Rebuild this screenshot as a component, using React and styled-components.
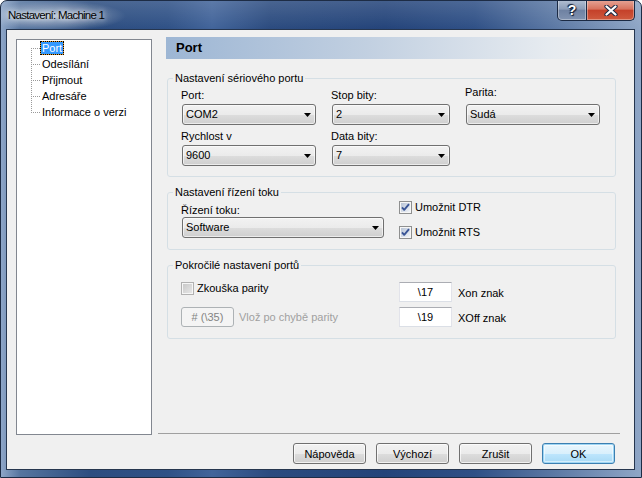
import React from "react";
import styled, { createGlobalStyle } from "styled-components";

const GlobalStyle = createGlobalStyle`
  html, body { margin: 0; padding: 0; }
  body {
    background: #fff;
    font-family: "Liberation Sans", Arial, sans-serif;
    font-size: 11px;
    color: #000;
  }
  * { box-sizing: border-box; }
`;

const Window = styled.div`
  width: 642px;
  height: 478px;
  display: flex;
  flex-direction: column;
  padding: 0 6px 7px 5px;
  border: 1px solid #1d2c45;
  border-radius: 7px 7px 0 0;
  overflow: hidden;
  background:
    radial-gradient(ellipse 70px 15px at 55px 15px, rgba(255,255,255,0.55), rgba(255,255,255,0) 100%),
    linear-gradient(to bottom, rgba(255,255,255,0.14), rgba(255,255,255,0) 28px),
    linear-gradient(to right, #8ea6c8 0%, #56759f 3%, #2c4d80 14%, #2f5186 26%, #42649a 33%, #2b4b7f 42%, #24447a 60%, #2f5086 74%, #5a77a3 86%, #8fa6c6 100%);
`;

const TitleBar = styled.div`
  height: 28px;
  flex-shrink: 0;
  display: flex;
  align-items: flex-start;
  padding-left: 2px;
`;

const Caption = styled.div`
  margin-top: 7px;
  font-size: 11.5px;
  line-height: 14px;
  letter-spacing: -0.75px;
  color: #000;
  text-shadow: 0 0 5px rgba(255,255,255,0.9), 0 0 9px rgba(255,255,255,0.7);
`;

const CaptionButtons = styled.div`
  margin-left: auto;
  margin-top: -1px;
  display: flex;
  height: 21px;
`;

const CapBtn = styled.div`
  width: ${(p) => p.$w}px;
  height: 100%;
  display: flex;
  align-items: center;
  justify-content: center;
  border: 1px solid #1b2a44;
  border-top: none;
  border-left: ${(p) => (p.$close ? "none" : "1px solid #1b2a44")};
  border-radius: ${(p) => (p.$close ? "0 0 5px 0" : "0 0 0 5px")};
  box-shadow: inset 0 0 0 1px rgba(255,255,255,0.35);
  background: ${(p) =>
    p.$close
      ? "linear-gradient(to bottom, #e6a698 0%, #d8735e 45%, #c5412a 52%, #cf5a3e 100%)"
      : "linear-gradient(to bottom, #b3c0d3 0%, #8c9db8 45%, #6f82a2 52%, #8193b1 100%)"};
  color: #fff;
  font-weight: bold;
  font-size: 14px;
  text-shadow: 0 0 1px #0d1a33, 1px 1px 1px #0d1a33, -1px -1px 1px #0d1a33;
`;

const Client = styled.div`
  flex: 1;
  display: flex;
  flex-direction: column;
  background: #f0f0f0;
  border: 1px solid #26364f;
  padding: 7px 0 0 9px;
`;

const Main = styled.div`
  display: flex;
  height: 398px;
`;

const Tree = styled.div`
  width: 136px;
  height: 396px;
  margin-top: 2px;
  border: 1px solid #828790;
  background: #fff;
`;

const TreeList = styled.div`
  position: relative;
  padding-left: 14px;
  &::before {
    content: "";
    position: absolute;
    left: 14px;
    top: 8px;
    height: 65px;
    border-left: 1px dotted #9a9a9a;
  }
`;

const TreeRow = styled.div`
  height: 16px;
  display: flex;
  align-items: center;
`;

const Stub = styled.span`
  width: 9px;
  border-top: 1px dotted #9a9a9a;
`;

const TreeLabel = styled.span`
  line-height: 12px;
  padding: 0 1px;
  border: 1px solid ${(p) => (p.$sel ? "#e39a2c" : "transparent")};
  outline: ${(p) => (p.$sel ? "1px dotted #000" : "none")};
  outline-offset: -1px;
  background: ${(p) => (p.$sel ? "#3399ff" : "transparent")};
  color: ${(p) => (p.$sel ? "#fff" : "#000")};
`;

const RightPanel = styled.div`
  margin-left: 6px;
  width: 462px;
  display: flex;
  flex-direction: column;
`;

const Header = styled.div`
  margin-left: 8px;
  width: 450px;
  height: 22px;
  line-height: 22px;
  padding-left: 10px;
  font-size: 13px;
  font-weight: bold;
  background: linear-gradient(to right, #9db6d4 0%, #c2d0e1 45%, #e6ebf0 85%, #f0f0f0 100%);
`;

const Group = styled.fieldset`
  margin: ${(p) => p.$mt}px 0 0 9px;
  width: 449px;
  min-width: 0;
  padding: 0;
  border: 1px solid #d5dfe5;
  border-radius: 3px;
`;

const Legend = styled.legend`
  margin-left: 5px;
  padding: 0 2px;
  font-size: 11px;
  line-height: 13px;
`;

const SerialGrid = styled.div`
  display: grid;
  grid-template-columns: 134px 118px 134px;
  column-gap: 16px;
  row-gap: 5px;
  padding: 4px 0 10px 14px;
`;

const Field = styled.div`
  display: flex;
  flex-direction: column;
  margin-top: ${(p) => p.$shift || 0}px;
`;

const Label = styled.div`
  line-height: 13px;
  margin-left: -1px;
  margin-bottom: ${(p) => (p.$gap ?? 2)}px;
`;

const ComboBox = styled.div`
  width: ${(p) => p.$w}px;
  height: 21px;
  display: flex;
  align-items: center;
  padding: 0 4px 0 3px;
  border: 1px solid #707070;
  border-radius: 3px;
  background: linear-gradient(to bottom, #f2f2f2 0%, #ebebeb 50%, #dddddd 51%, #cfcfcf 100%);
  box-shadow: inset 0 0 0 1px rgba(255,255,255,0.6);
  line-height: 13px;
`;

const ComboText = styled.span`
  flex: 1;
`;

const FlowBody = styled.div`
  display: flex;
  padding: 2px 0 10px 14px;
`;

const LeftCol = styled.div`
  width: ${(p) => p.$w}px;
  display: flex;
  flex-direction: column;
  padding-top: ${(p) => p.$pt || 0}px;
`;

const RightCol = styled.div`
  display: flex;
  flex-direction: column;
  gap: ${(p) => p.$gap}px;
`;

const CheckRow = styled.label`
  display: flex;
  align-items: center;
  height: 13px;
  gap: 3px;
  line-height: 13px;
`;

const AdvBody = styled.div`
  display: flex;
  padding: 10px 0 11px 13px;
`;

const AdvLeft = styled.div`
  width: 218px;
  display: flex;
  flex-direction: column;
  gap: 12px;
`;

const InsertRow = styled.div`
  display: flex;
  align-items: center;
  gap: 5px;
`;

const DisabledButton = styled.div`
  width: 53px;
  height: 20px;
  display: flex;
  align-items: center;
  justify-content: center;
  border: 1px solid #adb2b5;
  border-radius: 3px;
  background: #f4f4f4;
  color: #838383;
`;

const GrayText = styled.span`
  color: #a0a0a0;
`;

const EditRow = styled.div`
  display: flex;
  align-items: center;
  gap: 6px;
`;

const Edit = styled.div`
  width: 53px;
  height: 20px;
  display: flex;
  align-items: center;
  justify-content: center;
  background: #fff;
  border: 1px solid #dbdfe6;
  border-top-color: #abadb3;
  border-left-color: #e2e3ea;
  border-right-color: #e2e3ea;
`;

const EditLabel = styled.span`
  padding-top: 2px;
`;

const Separator = styled.div`
  margin-top: auto;
  margin-bottom: 1px;
  height: 1px;
  background: #a0a0a0;
`;

const ButtonRow = styled.div`
  margin-top: 8px;
  display: flex;
  justify-content: flex-end;
  gap: 10px;
  padding-right: 19px;
`;

const Button = styled.div`
  width: 73px;
  height: 21px;
  display: flex;
  align-items: center;
  justify-content: center;
  border: 1px solid ${(p) => (p.$default ? "#3c7fb1" : "#707070")};
  border-radius: 3px;
  background: ${(p) =>
    p.$default
      ? "linear-gradient(to bottom, #eaf6fd 0%, #d9f0fc 50%, #bee6fd 51%, #a7d9f5 100%)"
      : "linear-gradient(to bottom, #f2f2f2 0%, #ebebeb 50%, #dddddd 51%, #cfcfcf 100%)"};
  box-shadow: ${(p) =>
    p.$default ? "inset 0 0 0 1px #9fd6f4, inset 0 0 0 2px rgba(255,255,255,0.5)" : "inset 0 0 0 1px rgba(255,255,255,0.7)"};
`;

const Arrow = () => (
  <svg width="7" height="4" viewBox="0 0 7 4">
    <path d="M0 0H7L3.5 4Z" fill="#000" />
  </svg>
);

const Combo = ({ w, children }) => (
  <ComboBox $w={w}>
    <ComboText>{children}</ComboText>
    <Arrow />
  </ComboBox>
);

const CheckIcon = ({ checked, disabled, id }) => (
  <svg width="13" height="13" viewBox="0 0 13 13">
    <defs>
      <linearGradient id={id} x1="0" y1="0" x2="1" y2="1">
        <stop offset="0" stopColor={disabled ? "#c9c9c9" : "#b7c3d6"} />
        <stop offset="1" stopColor={disabled ? "#e6e6e6" : "#f1f4f8"} />
      </linearGradient>
    </defs>
    <rect x="0.5" y="0.5" width="12" height="12" fill="#f6f6f6" stroke={disabled ? "#b1b1b1" : "#8e8f8f"} />
    <rect x="2" y="2" width="9" height="9" fill={`url(#${id})`} />
    {checked && (
      <path d="M3 6.3 L5.2 8.8 L10 3.2" stroke="#3a5596" strokeWidth="1.9" fill="none" strokeLinejoin="round" />
    )}
  </svg>
);

const CloseGlyph = () => (
  <svg width="14" height="11" viewBox="0 0 14 11">
    <path d="M2.5 1.5L11.5 9.5M11.5 1.5L2.5 9.5" stroke="#1a2740" strokeWidth="4.2" strokeLinecap="round" />
    <path d="M2.5 1.5L11.5 9.5M11.5 1.5L2.5 9.5" stroke="#fff" strokeWidth="2.3" strokeLinecap="round" />
  </svg>
);

const treeItems = ["Port", "Odesílání", "Přijmout", "Adresáře", "Informace o verzi"];

export default function App() {
  return (
    <>
      <GlobalStyle />
      <Window>
        <TitleBar>
          <Caption>Nastavení: Machine 1</Caption>
          <CaptionButtons>
            <CapBtn $w={30}>?</CapBtn>
            <CapBtn $w={48} $close>
              <CloseGlyph />
            </CapBtn>
          </CaptionButtons>
        </TitleBar>
        <Client>
          <Main>
            <Tree>
              <TreeList>
                {treeItems.map((t, i) => (
                  <TreeRow key={t}>
                    <Stub />
                    <TreeLabel $sel={i === 0}>{t}</TreeLabel>
                  </TreeRow>
                ))}
              </TreeList>
            </Tree>
            <RightPanel>
              <Header>Port</Header>

              <Group $mt={13}>
                <Legend>Nastavení sériového portu</Legend>
                <SerialGrid>
                  <Field>
                    <Label>Port:</Label>
                    <Combo w={134}>COM2</Combo>
                  </Field>
                  <Field>
                    <Label>Stop bity:</Label>
                    <Combo w={118}>2</Combo>
                  </Field>
                  <Field $shift={-3}>
                    <Label $gap={5}>Parita:</Label>
                    <Combo w={134}>Sudá</Combo>
                  </Field>
                  <Field>
                    <Label>Rychlost v</Label>
                    <Combo w={134}>9600</Combo>
                  </Field>
                  <Field>
                    <Label>Data bity:</Label>
                    <Combo w={118}>7</Combo>
                  </Field>
                </SerialGrid>
              </Group>

              <Group $mt={9}>
                <Legend>Nastavení řízení toku</Legend>
                <FlowBody>
                  <LeftCol $w={217} $pt={3}>
                    <Label $gap={0}>Řízení toku:</Label>
                    <Combo w={202}>Software</Combo>
                  </LeftCol>
                  <RightCol $gap={12}>
                    <CheckRow>
                      <CheckIcon checked id="cb1" />
                      Umožnit DTR
                    </CheckRow>
                    <CheckRow>
                      <CheckIcon checked id="cb2" />
                      Umožnit RTS
                    </CheckRow>
                  </RightCol>
                </FlowBody>
              </Group>

              <Group $mt={9}>
                <Legend>Pokročilé nastavení portů</Legend>
                <AdvBody>
                  <AdvLeft>
                    <CheckRow>
                      <CheckIcon disabled id="cb3" />
                      Zkouška parity
                    </CheckRow>
                    <InsertRow>
                      <DisabledButton># (\35)</DisabledButton>
                      <GrayText>Vlož po chybě parity</GrayText>
                    </InsertRow>
                  </AdvLeft>
                  <RightCol $gap={5}>
                    <EditRow>
                      <Edit>\17</Edit>
                      <EditLabel>Xon znak</EditLabel>
                    </EditRow>
                    <EditRow>
                      <Edit>\19</Edit>
                      <EditLabel>XOff znak</EditLabel>
                    </EditRow>
                  </RightCol>
                </AdvBody>
              </Group>

              <Separator />
            </RightPanel>
          </Main>
          <ButtonRow>
            <Button>Nápověda</Button>
            <Button>Výchozí</Button>
            <Button>Zrušit</Button>
            <Button $default>OK</Button>
          </ButtonRow>
        </Client>
      </Window>
    </>
  );
}
